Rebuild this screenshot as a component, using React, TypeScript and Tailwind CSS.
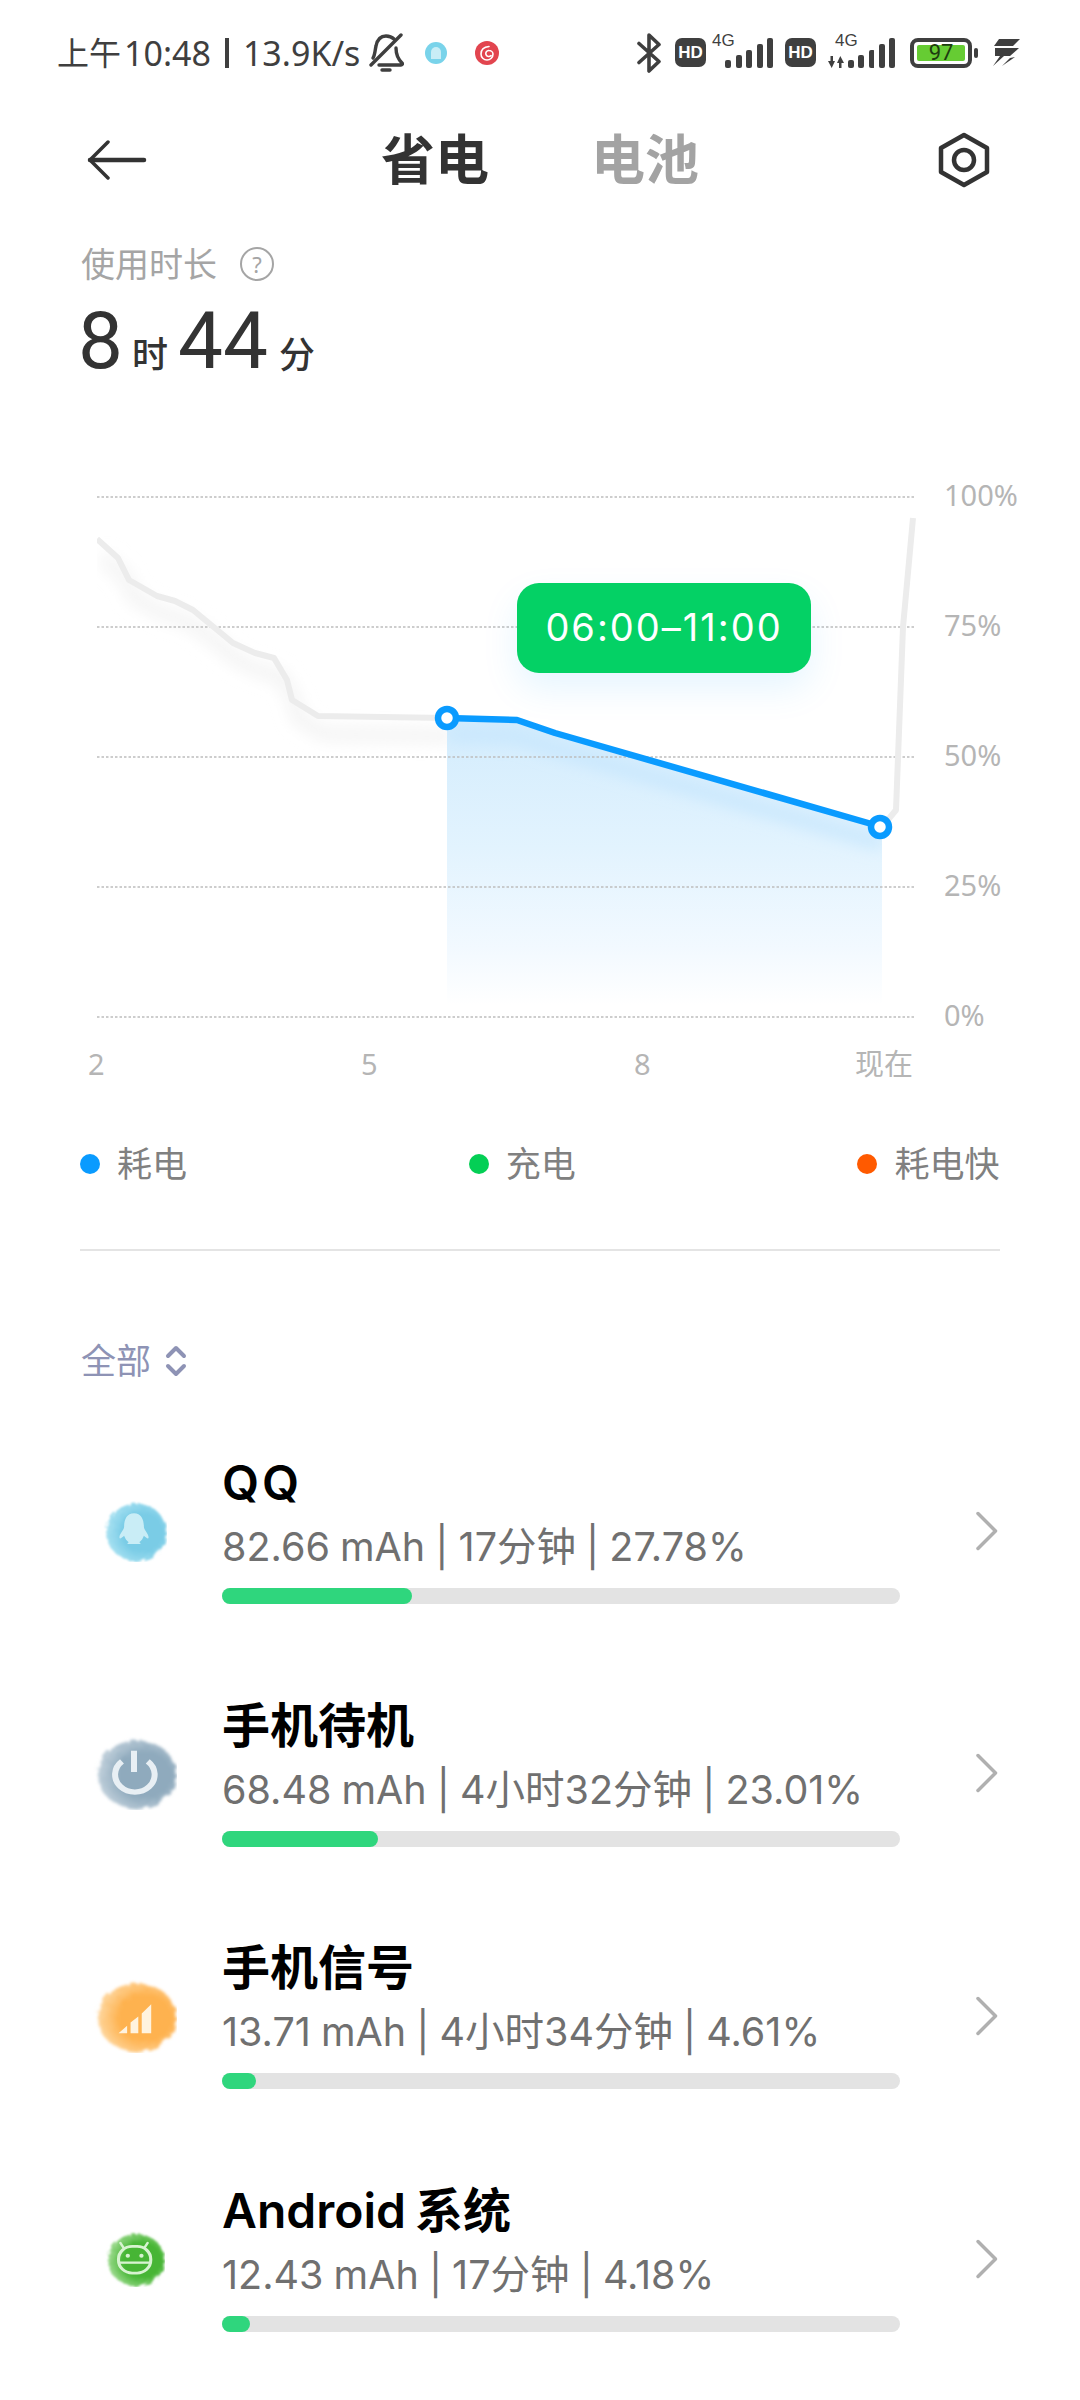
import { ReactNode } from 'react'

const cjk = '"Noto Sans CJK SC"'
const fontBody = { fontFamily: `"Noto Sans", ${cjk}, sans-serif` }
const fontInter = { fontFamily: `Inter, ${cjk}, sans-serif` }

const grayLine = '97,539 118,558 129,580 157,596 175,601 193,610 233,643 255,653 274,658 287,680 292,700 318,716 447,718'
const blueLine = '447,718 517,720 555,733 882,827'
const areaPath = 'M447 718 517 720 555 733 882 827V1005H447Z'

function SignalBars() {
  const heights = [8, 13, 18, 24, 30]
  return (
    <div className="flex items-end gap-[4.5px] h-[30px]">
      {heights.map((h) => (
        <svg key={h} width="6" height={h} className="block">
          <rect width="6" height={h} rx="2" fill="#3f3f3f" />
        </svg>
      ))}
    </div>
  )
}

function HdBadge() {
  return (
    <div className="w-[31px] h-[29px] rounded-[7px] bg-[#3f3f3f] flex items-center justify-center text-white text-[17px] font-bold leading-none [font-family:'Liberation_Sans',sans-serif]">
      HD
    </div>
  )
}

function StatusBar() {
  return (
    <div className="h-[105px] flex items-center pl-[57px] pr-[60px] text-[#3f3f3f]">
      <div className="flex items-center text-[34px] leading-none whitespace-nowrap" style={fontBody}>
        <span className="text-[32px]">上午</span>
        <span className="ml-[3px]">10:48</span>
        <span className="mx-[14px] w-[4px] h-[30px] bg-[#3f3f3f]" />
        <span>13.9K/s</span>
      </div>
      <svg width="36" height="40" viewBox="0 0 36 40" className="ml-[8px]" fill="none" stroke="#3f3f3f" strokeWidth="3.4" strokeLinecap="round" strokeLinejoin="round">
        <path d="M33 2 3 32" />
        <path d="M26 6c-2-2-5-3-8-3-6 0-9 5-10 10-1 4-1 9-3 12" />
        <path d="M28 15c0 5 1 10 6 15 1 1 0 2-1 2H11" />
        <path d="M14 37h8" />
      </svg>
      <div className="ml-[21px] w-[22px] h-[22px] rounded-full bg-[#79d3ea] blur-[0.6px] flex items-center justify-center">
        <div className="w-[10px] h-[12px] rounded-t-full rounded-b-[3px] bg-[#c8edf6]" />
      </div>
      <div className="ml-[28px] w-[24px] h-[24px] rounded-full bg-[#e2454f] blur-[0.5px] flex items-center justify-center">
        <svg width="16" height="16" viewBox="0 0 16 16" fill="none" stroke="#fff" strokeWidth="1.6" strokeLinecap="round">
          <path d="M10 1.500C5 2 2 5 2 9a6 6 0 0 0 12 0c0-2-2-3.500-4-3.500a3 3 0 1 0 2 5" />
        </svg>
      </div>

      <svg width="25" height="40" viewBox="0 0 25 40" className="ml-auto" fill="none" stroke="#3f3f3f" strokeWidth="3.6" strokeLinecap="round" strokeLinejoin="round">
        <path d="M2 10.500 22 28.500 12 38V2l10 9.500L2 29.500" />
      </svg>
      <div className="ml-[13px]">
        <HdBadge />
      </div>
      <div className="relative ml-[19px] w-[48px] h-[30px]">
        <span className="absolute -top-[6px] -left-[13px] text-[17px] leading-none [font-family:'Liberation_Sans',sans-serif]">4G</span>
        <SignalBars />
      </div>
      <div className="ml-[12px]">
        <HdBadge />
      </div>
      <div className="relative ml-[32px] w-[47px] h-[30px]">
        <span className="absolute -top-[6px] -left-[13px] text-[17px] leading-none [font-family:'Liberation_Sans',sans-serif]">4G</span>
        <svg width="16" height="12" viewBox="0 0 16 12" className="absolute bottom-0 -left-[20px]" fill="#3f3f3f">
          <path d="M0 5h2.500V0h2.500v5h2L3.700 12zM16 7h-2.500v5H11V7H9l3.300-7z" />
        </svg>
        <SignalBars />
      </div>
      <div className="ml-[15px] relative w-[62px] h-[30px] rounded-[8px] border-[4px] border-[#3f3f3f] p-[3px]">
        <div className="h-full rounded-[2px] bg-[#66cc33] flex items-center justify-center text-[22px] leading-none text-[#1d3d10] [font-family:'Roboto',sans-serif]">
          97
        </div>
      </div>
      <div className="ml-[2px] w-[4px] h-[10px] rounded-[2px] bg-[#3f3f3f]" />
      <svg width="27" height="29" viewBox="0 0 27 29" className="ml-[15px]" fill="#3f3f3f">
        <path d="M6 1H27L20 8H1z" />
        <path d="M2 10H26L17 18H11L0 28 7 18H2z" />
        <path d="M17 20 9 28 22 19z" />
      </svg>
    </div>
  )
}

function Header() {
  return (
    <div className="h-[110px] relative flex items-center justify-center" style={fontBody}>
      <svg width="60" height="40" viewBox="0 0 60 40" className="absolute left-[87px] top-[35px]" fill="none" stroke="#333" strokeLinecap="round" strokeLinejoin="round">
        <path d="M3 20h54" strokeWidth="4.500" />
        <path d="M21 2 3 20l18 18" strokeWidth="3.500" />
      </svg>
      <div className="flex gap-[102px] text-[54px] leading-none font-bold -mt-[2px]">
        <span className="text-[#333]">省电</span>
        <span className="text-[#a3a3a3]">电池</span>
      </div>
      <svg width="54" height="56" viewBox="0 0 54 56" className="absolute left-[937px] top-[27px]" fill="none" stroke="#333" strokeWidth="4.500" strokeLinejoin="round">
        <path d="M27 3 50 16v24L27 53 4 40V16z" />
        <circle cx="27" cy="28" r="10" />
      </svg>
    </div>
  )
}

function Duration() {
  return (
    <div className="pl-[81px] pt-[27px]" style={fontBody}>
      <div className="flex items-center h-[44px] text-[34px] leading-none text-[#a5a5a5]">
        <span>使用时长</span>
        <div className="ml-[23px] w-[34px] h-[34px] rounded-full border-[2px] border-[#a5a5a5] flex items-center justify-center text-[22px] leading-none">
          ?
        </div>
      </div>
      <div className="flex items-baseline text-[#333] h-[193px] pt-[15px] -ml-[3px] [font-family:'Roboto','Noto_Sans_CJK_SC',sans-serif]">
        <span className="text-[80px] leading-none">8</span>
        <span className="text-[36px] leading-none font-medium ml-[9px] mr-[10px]">时</span>
        <span className="text-[80px] leading-none">44</span>
        <span className="text-[36px] leading-none font-medium ml-[11px]">分</span>
      </div>
    </div>
  )
}

function Chart() {
  const grid = [497, 627, 757, 887, 1017]
  const yLabels = ['100%', '75%', '50%', '25%', '0%']
  return (
    <div>
      <div className="relative flex pl-[97px]">
        <svg width="820" height="556" viewBox="97 479 820 556" className="block">
          <defs>
            <linearGradient id="area" x1="0" y1="718" x2="0" y2="1005" gradientUnits="userSpaceOnUse">
              <stop offset="0" stopColor="#d3ecfd" />
              <stop offset="0.45" stopColor="#e2f3fe" />
              <stop offset="0.8" stopColor="#f2f9ff" />
              <stop offset="1" stopColor="#ffffff" />
            </linearGradient>
            <filter id="soft" x="-20%" y="-20%" width="140%" height="140%">
              <feGaussianBlur stdDeviation="8" />
            </filter>
            <clipPath id="areaClip">
              <path d={areaPath} />
            </clipPath>
          </defs>
          <polyline points={grayLine} transform="translate(6 18)" fill="none" stroke="#f2f2f2" strokeWidth="12" filter="url(#soft)" />
          <path d={areaPath} fill="url(#area)" />
          <g clipPath="url(#areaClip)">
            <polyline points={blueLine} transform="translate(0 16)" fill="none" stroke="#c6e6fd" strokeWidth="12" filter="url(#soft)" />
          </g>
          {grid.map((y) => (
            <line key={y} x1="97" x2="916" y1={y} y2={y} stroke="#bdbdbd" strokeWidth="1.500" strokeDasharray="2.500 2" />
          ))}
          <polyline points={grayLine} fill="none" stroke="#ececec" strokeWidth="6" strokeLinejoin="round" />
          <polyline points="882,827 896,810 903,627 913,518" fill="none" stroke="#ececec" strokeWidth="6" strokeLinejoin="round" />
          <polyline points={blueLine} fill="none" stroke="#0a9bff" strokeWidth="6.500" strokeLinejoin="round" />
          <circle cx="447" cy="718" r="9" fill="#fff" stroke="#0a9bff" strokeWidth="6.500" />
          <circle cx="880" cy="827" r="9" fill="#fff" stroke="#0a9bff" strokeWidth="6.500" />
        </svg>
        <div className="flex flex-col gap-[94px] pl-[27px] -mt-[2px] text-[#b5b5b5] text-[29px]" style={fontBody}>
          {yLabels.map((l) => (
            <div key={l} className="h-[36px] leading-[36px] whitespace-nowrap">{l}</div>
          ))}
        </div>
        <div className="absolute left-[517px] top-[104px] w-[294px] h-[90px] rounded-[22px] bg-[#04d165] text-white text-[38px] leading-none tracking-[2px] pb-[2px] flex items-center justify-center shadow-[0_16px_36px_rgba(10,155,255,0.10)]" style={fontInter}>
          06:00–11:00
        </div>
      </div>
      <div className="flex pl-[88px] h-[56px] items-center text-[#b5b5b5] text-[29px] leading-none" style={fontBody}>
        <span className="w-[273px]">2</span>
        <span className="w-[273px]">5</span>
        <span className="w-[221px]">8</span>
        <span>现在</span>
      </div>
    </div>
  )
}

function LegendItem({ color, label, width }: { color: string; label: string; width: string }) {
  return (
    <div className={`flex items-center gap-[17px] ${width}`}>
      <div className={`w-[20px] h-[20px] rounded-full ${color}`} />
      <span>{label}</span>
    </div>
  )
}

function Legend() {
  return (
    <div className="mx-[80px] pt-[53px] pb-[65px] border-b-[2px] border-[#e4e4e4]" style={fontBody}>
      <div className="flex text-[35px] leading-[40px] text-[#808080]">
        <LegendItem color="bg-[#0a9bff]" label="耗电" width="w-[390px]" />
        <LegendItem color="bg-[#04cf55]" label="充电" width="w-[390px]" />
        <LegendItem color="bg-[#ff5a00]" label="耗电快" width="w-[143px]" />
      </div>
    </div>
  )
}

function Blob({ w, h, color, edge, id, children }: { w: number; h: number; color: string; edge: string; id: string; children: ReactNode }) {
  return (
    <svg width={w} height={h} viewBox="0 0 100 100" preserveAspectRatio="none" className="block -ml-[3px]">
      <defs>
        <radialGradient id={id + 'g'} cx="0.6" cy="0.5" r="0.6">
          <stop offset="0.55" stopColor={color} />
          <stop offset="1" stopColor={edge} />
        </radialGradient>
        <filter id={id + 'f'} x="-20%" y="-20%" width="140%" height="140%">
          <feTurbulence baseFrequency="0.09" numOctaves="2" seed="4" />
          <feDisplacementMap in="SourceGraphic" scale="7" />
          <feGaussianBlur stdDeviation="1.800" />
        </filter>
      </defs>
      <ellipse cx="52" cy="52" rx="46" ry="45" fill={`url(#${id}g)`} filter={`url(#${id}f)`} />
      {children}
    </svg>
  )
}

const rows = [
  {
    name: 'QQ',
    nameClass: 'tracking-[3px]',
    detail: '82.66 mAh | 17分钟 | 27.78%',
    fill: 'w-[190px]',
    icon: (
      <Blob w={66} h={64} color="#7accE6" edge="#a9e2f2" id="qq">
        <path d="M50 24c-11 0-15 10-15 21 0 5-8 12-7 17 0 3 4 0 7-3 2 5 3 7 7 10-3 2-3 3 2 3h12c5 0 5-1 2-3 4-3 5-5 7-10 3 3 7 6 7 3 1-5-7-12-7-17 0-11-4-21-15-21z" fill="#c9edf6" />
      </Blob>
    ),
  },
  {
    name: '手机待机',
    nameClass: '',
    detail: '68.48 mAh | 4小时32分钟 | 23.01%',
    fill: 'w-[156px]',
    icon: (
      <Blob w={86} h={76} color="#8faabd" edge="#c2d1dc" id="pw">
        <path d="M36 36a23 23 0 1 0 30 0" fill="none" stroke="#e8eff4" strokeWidth="7" />
        <path d="M50 22v28" stroke="#e8eff4" strokeWidth="7" />
      </Blob>
    ),
  },
  {
    name: '手机信号',
    nameClass: '',
    detail: '13.71 mAh | 4小时34分钟 | 4.61%',
    fill: 'w-[34px]',
    icon: (
      <Blob w={86} h={76} color="#feb24f" edge="#fed79f" id="sg">
        <path d="M32 74 42 64V74zM46 60 55 52V74H46zM59 48 70 36V74H59z" fill="#fff3df" />
      </Blob>
    ),
  },
  {
    name: 'Android 系统',
    nameClass: '[word-spacing:-3px]',
    detail: '12.43 mAh | 17分钟 | 4.18%',
    fill: 'w-[28px]',
    icon: (
      <Blob w={62} h={58} color="#46b534" edge="#a0dc92" id="ad">
        <path d="M33 32 28 24M67 32 72 24" stroke="#d7f3d0" strokeWidth="4" strokeLinecap="round" />
        <rect x="25" y="30" width="52" height="46" rx="22" fill="none" stroke="#d7f3d0" strokeWidth="5" />
        <path d="M27 58H75" stroke="#d7f3d0" strokeWidth="4" />
        <circle cx="40" cy="46" r="3.500" fill="#d7f3d0" />
        <circle cx="62" cy="46" r="3.500" fill="#d7f3d0" />
      </Blob>
    ),
  },
]

function UsageRow({ name, nameClass, detail, fill, icon }: { name: string; nameClass: string; detail: string; fill: string; icon: ReactNode }) {
  return (
    <div className="flex items-center">
      <div className="w-[110px] ml-[80px] mr-[32px] flex justify-center">{icon}</div>
      <div className="w-[678px]">
        <div className={`h-[56px] text-[48px] leading-[56px] font-semibold text-black whitespace-nowrap ${nameClass}`} style={fontInter}>{name}</div>
        <div className="mt-[8px] h-[56px] text-[39.5px] leading-[56px] [word-spacing:-1px] text-[#707070] whitespace-nowrap" style={fontInter}>{detail}</div>
        <div className="mt-[13px] h-[16px] rounded-full bg-[#e3e3e3]">
          <div className={`h-full rounded-full bg-[#2fd67d] ${fill}`} />
        </div>
      </div>
      <svg width="26" height="40" viewBox="0 0 26 40" className="ml-[75px] mt-[2px]" fill="none" stroke="#b0b0b0" strokeWidth="3.500" strokeLinecap="round" strokeLinejoin="round">
        <path d="M3 2.500 20.500 20 3 37.500" />
      </svg>
    </div>
  )
}

export default function App() {
  return (
    <div className="w-[1080px] h-[2400px] bg-white overflow-hidden">
      <StatusBar />
      <Header />
      <Duration />
      <Chart />
      <Legend />
      <div className="pl-[81px] pt-[85px] h-[204px] flex items-start text-[#8e93b5]" style={fontBody}>
        <span className="text-[35px] leading-[50px]">全部</span>
        <svg width="22" height="32" viewBox="0 0 22 32" className="ml-[14px] mt-[9px]" fill="none" stroke="#8e93b5" strokeWidth="4" strokeLinecap="round" strokeLinejoin="round">
          <path d="M3 11 11 3l8 8M3 21l8 8 8-8" />
        </svg>
      </div>
      <div className="flex flex-col gap-[93.700px]">
        {rows.map((r) => (
          <UsageRow key={r.name} {...r} />
        ))}
      </div>
    </div>
  )
}
